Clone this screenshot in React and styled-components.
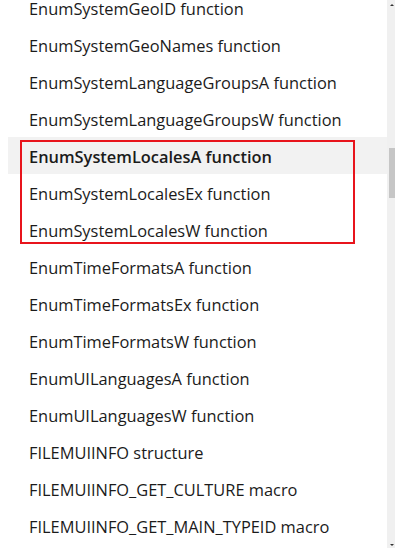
import React from 'react'
import styled, { createGlobalStyle } from "styled-components";

const Global = createGlobalStyle`
  html, body {
    margin: 0;
    padding: 0;
    background: #ffffff;
    overflow: hidden;
  }
`;

const Page = styled.div`
  width: 395px;
  height: 548px;
  display: flex;
  overflow: hidden;
  font-family: "Segoe UI", "Open Sans", "Noto Sans", sans-serif;
`;

const List = styled.ul`
  flex: 1;
  list-style: none;
  margin: -11px 0 0 0;
  padding: 0 0 0 8px;
`;

const Group = styled.div`
  position: relative;
`;

const Row = styled.li`
  height: 37px;
  display: flex;
  align-items: center;
  padding: 2px 0 0 21px;
  box-sizing: border-box;
  font-size: 16.4px;
  line-height: 17px;
  color: #1b1b1b;
  font-weight: ${(props) => (props.active ? 600 : 400)};
  background: ${(props) => (props.active ? "#f2f2f2" : "transparent")};
  white-space: nowrap;
`;

const Marker = styled.div`
  position: absolute;
  inset: 3px auto auto 12px;
  width: 335px;
  height: 104px;
  box-sizing: border-box;
  border: 2px solid #e8141c;
  pointer-events: none;
`;

const Scrollbar = styled.div`
  width: 8px;
  background: #f0f0f0;
  display: flex;
  flex-direction: column;
  align-items: flex-end;
  padding: 4px 0 2px;
  box-sizing: border-box;
`;

const Thumb = styled.div`
  width: 6px;
  height: 50px;
  margin-top: 142px;
  background: #c6c6c6;
`;

const Spacer = styled.div`
  flex: 1;
`;

const Arrow = styled.div`
  width: 0;
  height: 0;
  margin-right: 1px;
  border-left: 2px solid transparent;
  border-right: 2px solid transparent;
  ${(props) =>
    props.down ? "border-top: 2px solid #333;" : "border-bottom: 2px solid #333;"}
`;

const before = [
  "EnumSystemGeoID function",
  "EnumSystemGeoNames function",
  "EnumSystemLanguageGroupsA function",
  "EnumSystemLanguageGroupsW function",
];

const marked = [
  "EnumSystemLocalesA function",
  "EnumSystemLocalesEx function",
  "EnumSystemLocalesW function",
];

const after = [
  "EnumTimeFormatsA function",
  "EnumTimeFormatsEx function",
  "EnumTimeFormatsW function",
  "EnumUILanguagesA function",
  "EnumUILanguagesW function",
  "FILEMUIINFO structure",
  "FILEMUIINFO_GET_CULTURE macro",
  "FILEMUIINFO_GET_MAIN_TYPEID macro",
];

const App = () => {
  return (
    <>
      <Global />
      <Page>
        <List>
          {before.map((t) => (
            <Row key={t}>{t}</Row>
          ))}
          <Group>
            {marked.map((t, i) => (
              <Row key={t} active={i === 0}>
                {t}
              </Row>
            ))}
            <Marker />
          </Group>
          {after.map((t) => (
            <Row key={t}>{t}</Row>
          ))}
        </List>
        <Scrollbar>
          <Arrow />
          <Thumb />
          <Spacer />
          <Arrow down />
        </Scrollbar>
      </Page>
    </>
  )
}

export default App
